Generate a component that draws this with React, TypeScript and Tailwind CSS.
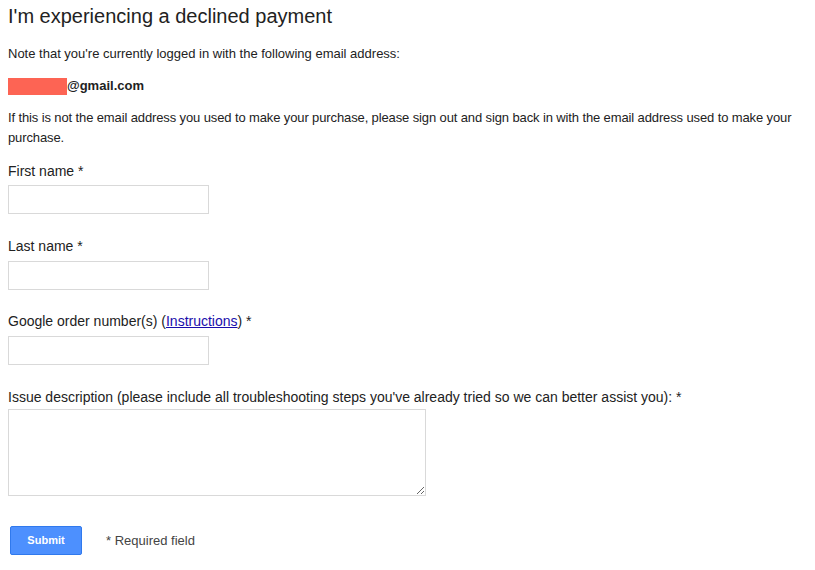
import React from 'react'

export default function App() {
  return (
    <div className="min-h-[570px] bg-white px-2 pt-[3px] text-[#222] font-['Liberation_Sans',Arial,sans-serif]">
      <h1 className="text-[20px] leading-[26px]">I'm experiencing a declined payment</h1>

      <p className="mt-[15px] text-[13px] leading-[20px]">
        Note that you're currently logged in with the following email address:
      </p>

      <div className="mt-[12px] flex items-center text-[13px] font-bold leading-[20px]">
        <span className="inline-block h-[17px] w-[59px] bg-[#fd6454]"></span>
        <span>@gmail.com</span>
      </div>

      <p className="mt-[12px] text-[13px] leading-[20px] tracking-[-0.12px]">
        If this is not the email address you used to make your purchase, please sign out and sign back in with the
        email address used to make your purchase.
      </p>

      <form className="mt-[13px]" onSubmit={(e) => e.preventDefault()}>
        <div>
          <label className="block text-[14px] leading-[20px]">First name *</label>
          <input type="text" className="mt-[4px] block h-[29px] w-[201px] border border-[#d9d9d9] bg-white outline-none" />
        </div>

        <div className="mt-[22px]">
          <label className="block text-[14px] leading-[20px]">Last name *</label>
          <input type="text" className="mt-[5px] block h-[29px] w-[201px] border border-[#d9d9d9] bg-white outline-none" />
        </div>

        <div className="mt-[21px]">
          <label className="block text-[14px] leading-[20px]">
            Google order number(s) (<a href="#" className="text-[#1a0dab] underline">Instructions</a>) *
          </label>
          <input type="text" className="mt-[5px] block h-[29px] w-[201px] border border-[#d9d9d9] bg-white outline-none" />
        </div>

        <div className="mt-[22px]">
          <label className="block text-[14px] leading-[20px]">
            Issue description (please include all troubleshooting steps you've already tried so we can better assist
            you): *
          </label>
          <textarea className="mt-[2px] block h-[87px] w-[418px] border border-[#d9d9d9] bg-white outline-none"></textarea>
        </div>

        <div className="mt-[30px] flex items-center">
          <button
            type="submit"
            className="ml-[2px] h-[29px] w-[72px] rounded-[2px] border border-[#3079ed] bg-[#4d90fe] text-[11px] font-bold text-white"
          >
            Submit
          </button>
          <span className="ml-[24px] text-[13px] text-[#444]">* Required field</span>
        </div>
      </form>
    </div>
  )
}
